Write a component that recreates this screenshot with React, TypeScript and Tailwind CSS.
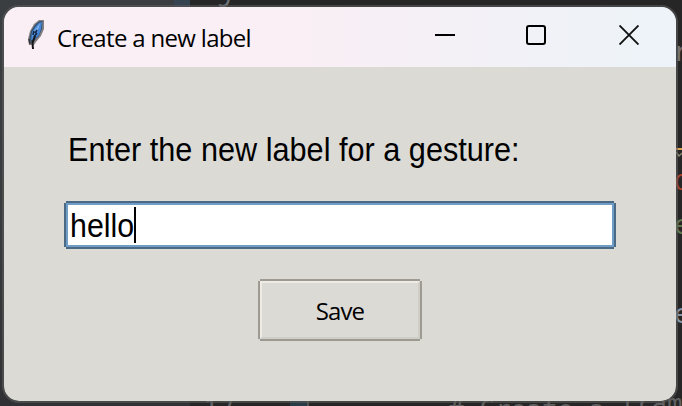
import React from "react";

function Feather() {
  return (
    <svg width="18" height="33" viewBox="0 0 18 33" fill="none">
      <path d="M12 1 L17 1 L17 10 L14 17 L9 23 L7 26 L2 26 L1 20 L3 12 L7 5 Z" fill="#858083" />
      <path d="M12 2.500 L15.500 2 L15 10 L12 17 L8 21 L4 24 L2.500 19 L4 12 L8 6 Z" fill="#34506f" />
      <path d="M12 4 L15 3 L14 10 L12 16 L8 20 L4 21 L5 13 L9 7 Z" fill="#4485d6" />
      <path d="M13 4 L10 8 L7 12 L5 18 L9 13 L12 9 Z" fill="#78aeea" />
      <path d="M10 11 L8 14 M10 14 L7 18 M7 12 L6 16" stroke="#142440" strokeWidth="1.500" />
      <path d="M8 17 L5.500 24 L6 30" stroke="#151515" strokeWidth="2" />
      <path d="M2 20 L3 25" stroke="#333" strokeWidth="1.500" />
    </svg>
  );
}

function TitleBar() {
  return (
    <header className="flex h-[60px] shrink-0 items-start bg-linear-to-r from-[#f9eff5] from-45% to-[#edf3f8] to-95%">
      <div className="ml-[23px] mt-3 w-[18px]"><Feather /></div>
      <h1 className="ml-[12px] mt-[14px] w-[300px] whitespace-nowrap font-['Open_Sans',sans-serif] text-[24px] leading-[34px] tracking-[-0.68px] text-black">Create a new label</h1>
      <div className="ml-auto flex pt-[18px] pr-[37px]">
        <svg width="20" height="20" className="mr-[71px]"><path d="M0 10H20" stroke="#000" strokeWidth="2" /></svg>
        <svg width="20" height="20" className="mr-[73px]"><rect x="1" y="1" width="18" height="18" rx="2" fill="none" stroke="#000" strokeWidth="2" /></svg>
        <svg width="20" height="20"><path d="M0.500 0.500L19.500 19.500M19.500 0.500L0.500 19.500" stroke="#111" strokeWidth="1.900" /></svg>
      </div>
    </header>
  );
}

function EditorBackdrop() {
  return (
    <div className="absolute inset-0 overflow-hidden bg-[#262626] font-['DejaVu_Sans_Mono',monospace] text-[26px] leading-[26px]">
      <div className="absolute inset-y-0 left-0 w-[190px] bg-linear-to-b from-[#3a3e40] via-[#393c3e] to-[#303134]" />
      <div className="absolute left-[174px] top-0 h-[7px] w-[16px] bg-[#364451]" />
      <div className="absolute left-[290px] top-[401px] h-[5px] w-[17px] bg-[#293b46]" />
      <div className="absolute left-[307px] top-[401px] h-[5px] w-[2px] bg-[#555]" />
      <span className="absolute left-[216px] top-[-15px] text-[#707376]">9</span>
      <span className="absolute left-[203px] top-[397px] text-[#606366]">17</span>
      <span className="absolute left-[448px] top-[397px] whitespace-pre text-[#606060]"># Create a </span>
      <span className="absolute left-[620px] top-[391px] whitespace-pre text-[#606060]">fram</span>
      <span className="absolute left-[673px] top-[39px] text-[#77736e]">r</span>
      <span className="absolute left-[676px] top-[148px] h-[2px] w-[6px] bg-[#dca657]" />
      <svg className="absolute left-[676px] top-[151px]" width="6" height="6"><path d="M0 1L3 5L6 2" stroke="#85866c" strokeWidth="1.500" fill="none" /></svg>
      <span className="absolute left-[674px] top-[170px] text-[22px] text-[#a8432b]">C</span>
      <span className="absolute left-[674px] top-[212px] text-[#61784f]">e</span>
      <span className="absolute left-[674px] top-[301px] text-[#8795a4]">e</span>
    </div>
  );
}

export default function App() {
  return (
    <div className="relative h-[406px] w-[682px] overflow-hidden px-[2px] pt-[5px]">
      <EditorBackdrop />
      <main className="relative flex h-[398px] w-[676px] flex-col overflow-hidden rounded-[17px] border-2 border-[#5a5a5a]/60 bg-[#dcdad5] bg-clip-padding">
        <TitleBar />
        <section className="flex flex-1 flex-col pl-[60px] font-['Liberation_Sans',Arial,sans-serif] text-[33px] text-black">
          <label htmlFor="gesture" className="ml-[4px] mt-[64px] h-[38px] w-[500px] origin-left scale-x-[0.929] whitespace-nowrap leading-[38px]">Enter the new label for a gesture:</label>
          <div className="mt-[32px] grid h-[48px] w-[552px] grid-cols-[2px_1fr_2px] grid-rows-[2px_1fr_2px]">
            <div className="col-start-2 bg-[#4a6984]" />
            <div className="col-start-1 row-start-2 bg-[#4a6984]" />
            <div id="gesture" className="col-start-2 row-start-2 flex items-center border-2 border-[#6f9dc6] bg-white pl-[2px]">
              <span className="w-[64px] origin-left scale-x-[0.92] whitespace-nowrap pt-[2px] leading-[38px]">hello</span>
              <span className="h-[36px] w-[2px] bg-black" />
            </div>
            <div className="col-start-3 row-start-2 bg-[#4a6984]" />
            <div className="col-start-2 row-start-3 bg-[#4a6984]" />
          </div>
          <button className="ml-[194px] mt-[30px] grid h-[62px] w-[164px] grid-cols-[2px_1fr_2px] grid-rows-[2px_1fr_2px] font-['Open_Sans',sans-serif] text-[24px]">
            <span className="col-start-2 bg-[#9e9a91]" />
            <span className="col-start-1 row-start-2 bg-[#9e9a91]" />
            <span className="col-start-2 row-start-2 flex items-center justify-center border-2 border-b-[#cfcdc8] border-l-[#eeebe7] border-r-[#cfcdc8] border-t-[#eeebe7] pt-[1px] tracking-[-0.9px]">Save</span>
            <span className="col-start-3 row-start-2 bg-[#9e9a91]" />
            <span className="col-start-2 row-start-3 bg-[#9e9a91]" />
          </button>
        </section>
      </main>
    </div>
  );
}
